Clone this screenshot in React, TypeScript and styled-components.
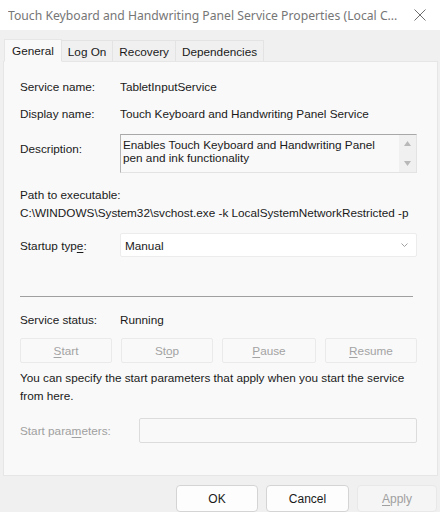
import React from "react";
import styled, { createGlobalStyle } from "styled-components";

const GlobalStyle = createGlobalStyle`
  html, body {
    margin: 0;
    padding: 0;
    background: #f0f0f0;
  }
  * {
    box-sizing: border-box;
  }
`;

const Window = styled.div`
  width: 440px;
  height: 512px;
  background: #f0f0f0;
  display: flex;
  flex-direction: column;
  font-family: "Liberation Sans", Arial, sans-serif;
  font-size: 11.75px;
  color: #1a1a1a;
  overflow: hidden;
`;

const TitleBar = styled.div`
  height: 30px;
  flex: none;
  background: #ffffff;
  display: flex;
  align-items: center;
  justify-content: space-between;
  padding: 0 8px 0 8px;
`;

const Title = styled.span`
  font-family: "Noto Sans", "Open Sans", sans-serif;
  font-size: 12.2px;
  color: #767676;
  white-space: nowrap;
  overflow: hidden;
  min-width: 0;
`;

const CloseButton = styled.button`
  width: 18px;
  height: 18px;
  flex: none;
  border: none;
  background: transparent;
  padding: 0;
  display: flex;
  align-items: center;
  justify-content: center;
  margin-right: 3px;
`;

const Body = styled.div`
  padding: 8px 2px 0 3px;
  display: flex;
  flex-direction: column;
`;

const TabStrip = styled.div`
  display: flex;
  align-items: flex-end;
  padding-left: 1px;
  height: 23px;
  position: relative;
  z-index: 1;
`;

const Tab = styled.div<{ $active?: boolean }>`
  height: ${(p) => (p.$active ? "23px" : "21px")};
  padding: 0 ${(p) => (p.$active ? "7px" : "6px")};
  display: flex;
  align-items: center;
  background: ${(p) => (p.$active ? "#f9f9f9" : "#f0f0f0")};
  border: 1px solid ${(p) => (p.$active ? "#e6e6e6" : "#e3e3e3")};
  border-bottom: ${(p) => (p.$active ? "1px solid #f9f9f9" : "none")};
  margin-bottom: ${(p) => (p.$active ? "-1px" : "0")};
  margin-left: ${(p) => (p.$active ? "0" : "-1px")};
  color: #1a1a1a;
  white-space: nowrap;
`;

const Panel = styled.div`
  height: 415px;
  background: #f9f9f9;
  border: 1px solid #e6e6e6;
  padding: 14px 20px 0 16px;
  display: flex;
  flex-direction: column;
`;

const Row = styled.div<{ $top?: number; $height?: number }>`
  display: flex;
  align-items: center;
  margin-top: ${(p) => p.$top ?? 0}px;
  height: ${(p) => p.$height ?? 20}px;
`;

const TopRow = styled.div<{ $top?: number }>`
  display: flex;
  align-items: flex-start;
  margin-top: ${(p) => p.$top ?? 0}px;
`;

const Label = styled.span<{ $width?: number; $disabled?: boolean; $pad?: number }>`
  width: ${(p) => p.$width ?? 100}px;
  flex: none;
  padding-top: ${(p) => p.$pad ?? 0}px;
  color: ${(p) => (p.$disabled ? "#a0a0a0" : "#1a1a1a")};
  white-space: nowrap;
`;

const Value = styled.span`
  white-space: nowrap;
`;

const DescriptionBox = styled.div`
  flex: 1;
  height: 39px;
  display: flex;
  background: #f9f9f9;
  border-top: 1px solid #a8a8a8;
  border-left: 1px solid #b4b4b4;
  border-right: 1px solid #e3e3e3;
  border-bottom: 1px solid #e3e3e3;
`;

const DescriptionText = styled.div`
  flex: 1;
  padding: 3px 3px 0 2px;
  line-height: 13px;
`;

const ScrollTrack = styled.div`
  width: 17px;
  flex: none;
  background: #f0f0f0;
  display: flex;
  flex-direction: column;
  justify-content: space-between;
  align-items: center;
  padding: 6px 0 6px;
`;

const Block = styled.div<{ $top?: number }>`
  margin-top: ${(p) => p.$top ?? 0}px;
  line-height: 18px;
  white-space: nowrap;
`;

const Select = styled.div`
  flex: 1;
  height: 24px;
  background: #ffffff;
  border: 1px solid #ececec;
  border-radius: 2px;
  display: flex;
  align-items: center;
  justify-content: space-between;
  padding: 0 8px 0 4px;
`;

const Divider = styled.div<{ $top?: number }>`
  margin-top: ${(p) => p.$top ?? 0}px;
  height: 1px;
  width: 393px;
  background: #a0a0a0;
  flex: none;
`;

const ButtonGrid = styled.div<{ $top?: number }>`
  margin-top: ${(p) => p.$top ?? 0}px;
  display: grid;
  grid-template-columns: 92px 92px 94px 92px;
  column-gap: 9px;
  justify-content: space-between;
`;

const ServiceButton = styled.button`
  height: 25px;
  background: #f9f9f9;
  border: 1px solid #eaeaea;
  border-radius: 2px;
  font-family: inherit;
  font-size: inherit;
  color: #a3a3a3;
  padding: 0;
`;

const Key = styled.span`
  text-decoration: underline;
  text-underline-offset: 2px;
`;

const Input = styled.div`
  flex: 1;
  height: 25px;
  background: #f9f9f9;
  border: 1px solid #dcdcdc;
  border-radius: 2px;
`;

const Footer = styled.div`
  display: flex;
  justify-content: flex-end;
  gap: 8px;
  padding: 9px 3px 0 0;
`;

const DialogButton = styled.button<{ $disabled?: boolean; $width?: number }>`
  width: ${(p) => p.$width ?? 82}px;
  height: 27px;
  background: ${(p) => (p.$disabled ? "#f5f5f5" : "#fdfdfd")};
  border: 1px solid ${(p) => (p.$disabled ? "#e8e8e8" : "#d4d4d4")};
  border-radius: 4px;
  font-family: inherit;
  font-size: 12px;
  color: ${(p) => (p.$disabled ? "#a0a0a0" : "#1a1a1a")};
  padding: 0;
`;

const Arrow = ({ up }: { up?: boolean }) => (
  <svg width="7" height="5" viewBox="0 0 7 5">
    <path d={up ? "M0 5 L3.5 0 L7 5 Z" : "M0 0 L3.5 5 L7 0 Z"} fill="#b8b8b8" />
  </svg>
);

export default function App() {
  return (
    <>
      <GlobalStyle />
      <Window>
        <TitleBar>
          <Title>Touch Keyboard and Handwriting Panel Service Properties (Local C...</Title>
          <CloseButton aria-label="Close">
            <svg width="12" height="12" viewBox="0 0 12 12">
              <path d="M0.5 0.5 L11.5 11.5 M11.5 0.5 L0.5 11.5" stroke="#6e6e6e" strokeWidth="1" />
            </svg>
          </CloseButton>
        </TitleBar>
        <Body>
          <TabStrip>
            <Tab $active>General</Tab>
            <Tab>Log On</Tab>
            <Tab>Recovery</Tab>
            <Tab>Dependencies</Tab>
          </TabStrip>
          <Panel>
            <Row>
              <Label>Service name:</Label>
              <Value>TabletInputService</Value>
            </Row>
            <Row $top={7}>
              <Label>Display name:</Label>
              <Value>Touch Keyboard and Handwriting Panel Service</Value>
            </Row>
            <TopRow $top={11}>
              <Label $pad={8}>Description:</Label>
              <DescriptionBox>
                <DescriptionText>
                  Enables Touch Keyboard and Handwriting Panel
                  <br />
                  pen and ink functionality
                </DescriptionText>
                <ScrollTrack>
                  <Arrow up />
                  <Arrow />
                </ScrollTrack>
              </DescriptionBox>
            </TopRow>
            <Block $top={13}>
              Path to executable:
              <br />
              C:\WINDOWS\System32\svchost.exe -k LocalSystemNetworkRestricted -p
            </Block>
            <Row $top={11} $height={24}>
              <Label>
                Startup typ<Key>e</Key>:
              </Label>
              <Select>
                <span>Manual</span>
                <svg width="7" height="4" viewBox="0 0 7 4">
                  <path d="M0.5 0.5 L3.5 3.5 L6.5 0.5" stroke="#a0a0a0" fill="none" strokeWidth="1" />
                </svg>
              </Select>
            </Row>
            <Divider $top={39} />
            <Row $top={13} $height={18}>
              <Label>Service status:</Label>
              <Value>Running</Value>
            </Row>
            <ButtonGrid $top={10}>
              <ServiceButton disabled>
                <Key>S</Key>tart
              </ServiceButton>
              <ServiceButton disabled>
                St<Key>o</Key>p
              </ServiceButton>
              <ServiceButton disabled>
                <Key>P</Key>ause
              </ServiceButton>
              <ServiceButton disabled>
                <Key>R</Key>esume
              </ServiceButton>
            </ButtonGrid>
            <Block $top={6}>
              You can specify the start parameters that apply when you start the service
              <br />
              from here.
            </Block>
            <Row $top={13} $height={25}>
              <Label $width={119} $disabled>
                Start para<Key>m</Key>eters:
              </Label>
              <Input />
            </Row>
          </Panel>
        </Body>
        <Footer>
          <DialogButton>OK</DialogButton>
          <DialogButton $width={83}>Cancel</DialogButton>
          <DialogButton $disabled $width={80}>
            <Key>A</Key>pply
          </DialogButton>
        </Footer>
      </Window>
    </>
  );
}
